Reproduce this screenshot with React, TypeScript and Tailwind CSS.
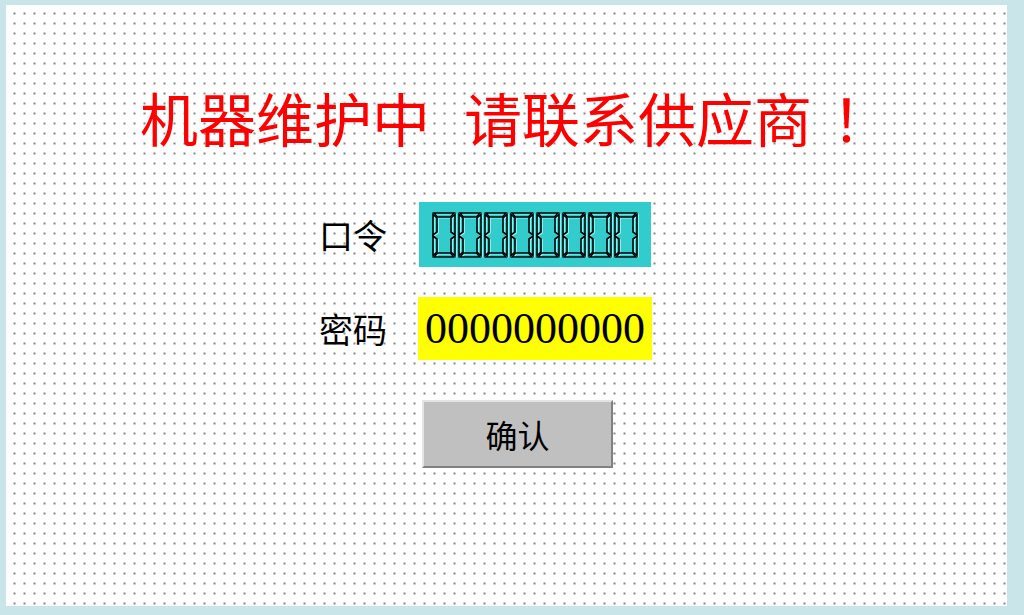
import React from 'react';

const CJK = "font-['Noto_Sans_CJK_SC','Noto_Sans_CJK_JP',sans-serif]";

// one hollow 7-segment "0", engraved look
function SegZero() {
  const segs = [
    '2,1 22,1 18.5,5 5.5,5',
    '1,2.5 5,6 5,20 1,23',
    '23,2.5 23,23 19,20 19,6',
    '1,24 5,27 5,40 1,43.5',
    '23,24 23,43.5 19,40 19,27',
    '2,45 5.5,41 18.5,41 22,45',
  ];
  return (
    <svg width="26" height="46" viewBox="0 0 26 46" className="shrink-0">
      <g transform="translate(1.2,0.8)" fill="none" stroke="#9ff5f5" strokeWidth="1.3">
        {segs.map((p) => (
          <polygon key={p} points={p} />
        ))}
      </g>
      <g fill="none" stroke="#000" strokeWidth="1.6" strokeLinejoin="miter">
        {segs.map((p) => (
          <polygon key={p} points={p} />
        ))}
      </g>
    </svg>
  );
}

export default function App() {
  return (
    <div className="w-[1024px] h-[615px] bg-[#c9e5e9] pl-[6px] pt-[5px] overflow-hidden">
      <div className="w-[1001px] h-[601px] bg-white [background-image:radial-gradient(circle,#444_0.6px,transparent_0.9px)] [background-size:10px_10px] [background-position:3.5px_3.5px] flex flex-col">
        <div className={`mt-[83px] ml-[134px] flex text-[58px] leading-none text-[#ff0000] whitespace-nowrap ${CJK}`}>
          <span>机器维护中</span>
          <span className="ml-[34px]">请联系供应商<span className="ml-[20px]">！</span></span>
        </div>

        <div className="mt-[56px] ml-[313px] flex flex-col">
          <div className="flex items-center">
            <span className={`w-[72px] text-[34px] leading-none text-black ${CJK}`}>口令</span>
            <div className="ml-[28px] w-[232px] h-[65px] bg-[#33cccc] flex items-center pl-[13px]">
              {Array.from({ length: 8 }).map((_, i) => (
                <SegZero key={i} />
              ))}
            </div>
          </div>

          <div className="mt-[30px] flex items-center">
            <span className={`w-[72px] text-[34px] leading-none text-black ${CJK}`}>密码</span>
            <div className="ml-[27px] w-[234px] h-[63px] bg-[#ffff00] flex items-center justify-center font-['Liberation_Serif',serif] text-[44px] leading-none text-black">
              0000000000
            </div>
          </div>

          <button
            className={`mt-[40px] ml-[103px] w-[191px] h-[68px] bg-[#c0c0c0] border-2 border-t-[#e4e4e4] border-l-[#e4e4e4] border-r-[#808080] border-b-[#808080] text-[32px] leading-none text-black ${CJK}`}
          >
            确认
          </button>
        </div>
      </div>
    </div>
  );
}
